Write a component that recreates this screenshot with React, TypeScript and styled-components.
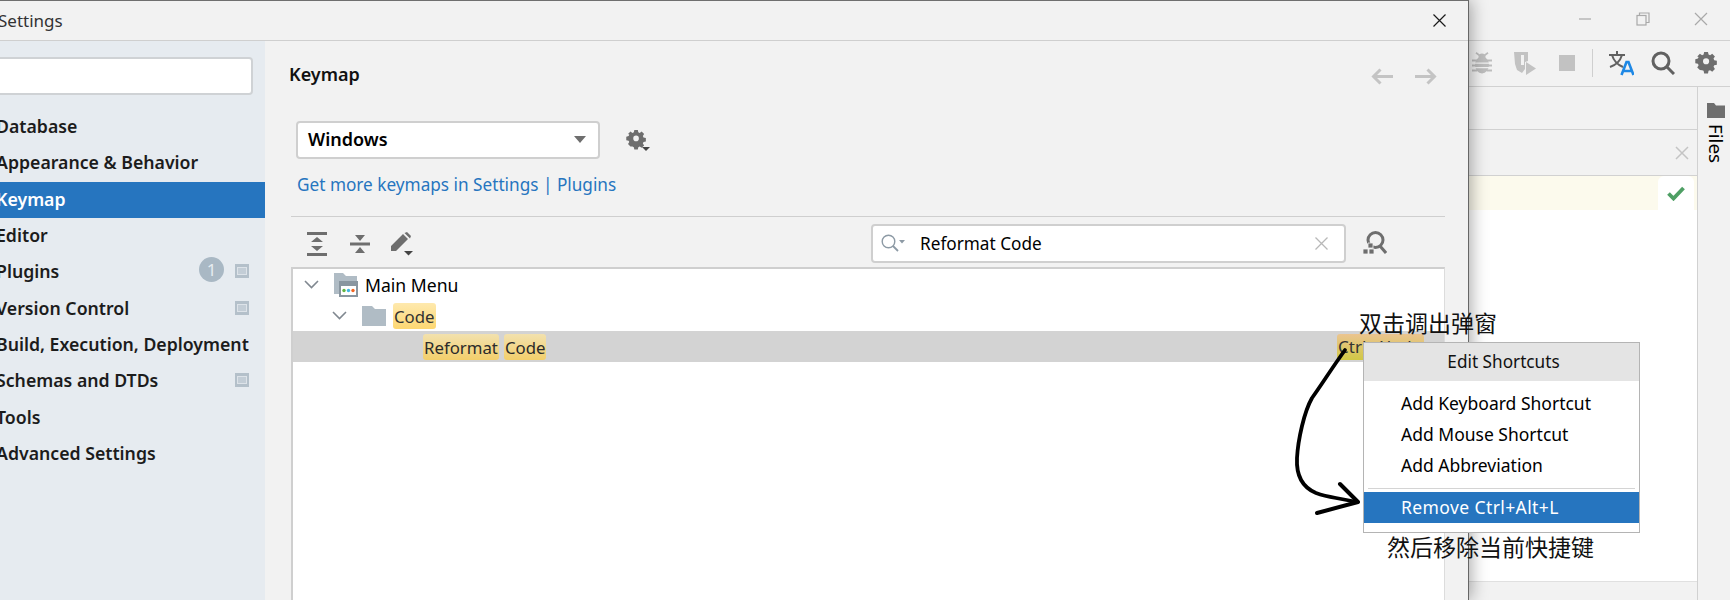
import styled, { createGlobalStyle } from "styled-components";

const UI_FONT = `"Noto Sans", "Open Sans", sans-serif`;
const CJK_FONT = `"Noto Sans CJK SC", "Noto Sans", sans-serif`;

const GlobalStyle = createGlobalStyle`
  html, body {
    margin: 0;
    padding: 0;
    background: #ffffff;
    overflow: hidden;
  }
  * {
    box-sizing: border-box;
  }
`;

const sidebarItems = [
  { label: "Database" },
  { label: "Appearance & Behavior" },
  { label: "Keymap", active: true },
  { label: "Editor" },
  { label: "Plugins", badge: "1", pin: true },
  { label: "Version Control", pin: true },
  { label: "Build, Execution, Deployment" },
  { label: "Schemas and DTDs", pin: true },
  { label: "Tools" },
  { label: "Advanced Settings" },
];

function App() {
  return (
    <Page>
      <GlobalStyle />
      <IdeWindow>
        <IdeTitleBar>
          <WindowButton>
            <svg width="14" height="14" viewBox="0 0 14 14">
              <path d="M1 7h12" stroke="#a9a9a9" strokeWidth="1.2" />
            </svg>
          </WindowButton>
          <WindowButton>
            <svg width="14" height="14" viewBox="0 0 14 14" fill="none" stroke="#a9a9a9" strokeWidth="1.2">
              <rect x="1" y="3.5" width="9" height="9.5" />
              <path d="M3.5 3.5V1H13v9.5h-3" />
            </svg>
          </WindowButton>
          <WindowButton>
            <svg width="14" height="14" viewBox="0 0 14 14">
              <path d="M1 1l12 12M13 1L1 13" stroke="#a9a9a9" strokeWidth="1.2" />
            </svg>
          </WindowButton>
        </IdeTitleBar>
        <IdeToolbar>
          <ToolIcon>
            <svg width="20" height="22" viewBox="0 0 20 22" fill="#bdbdbd">
              <ellipse cx="10" cy="13" rx="7" ry="8.500" />
              <circle cx="10" cy="5" r="3.500" />
              <path d="M4.500 0l4 3-1 1.500-4-3zM15.500 0l-4 3 1 1.500 4-3z" />
              <path d="M0 7.500h5v2H0zM15 7.500h5v2h-5zM0 12.500h5v2H0zM15 12.500h5v2h-5zM0 17.500h5v2H0zM15 17.500h5v2h-5z" />
              <path d="M3 10.500h14v1.300H3zM3 15h14v1.300H3z" fill="#f2f2f2" />
            </svg>
          </ToolIcon>
          <ToolIcon>
            <svg width="24" height="24" viewBox="0 0 24 24">
              <path d="M1 1h14v9l-3 1v7l-3 4-5-3-2-6z" fill="#c2c2c2" />
              <path d="M8 4h3v10H8z" fill="#f2f2f2" />
              <path d="M13 11l10 6.500-10 6.500z" fill="#c2c2c2" />
            </svg>
          </ToolIcon>
          <ToolIcon>
            <StopSquare />
          </ToolIcon>
          <ToolDivider />
          <ToolIcon>
            <svg width="26" height="26" viewBox="0 0 26 26" fill="none">
              <path d="M1 5h16M9 1v4M4 5c1.500 5 6 10 11 12M14 5c-1.500 5-6 10-12 12" stroke="#616161" strokeWidth="2" />
              <path d="M13.500 25l5-13h2l5 13M15.500 21h8" stroke="#1e88e5" strokeWidth="2.600" />
            </svg>
          </ToolIcon>
          <ToolIcon>
            <svg width="24" height="24" viewBox="0 0 24 24" fill="none" stroke="#616161" strokeWidth="3">
              <circle cx="10" cy="10" r="8" />
              <path d="M16 16l7 7" />
            </svg>
          </ToolIcon>
          <ToolIcon>
            <GearIcon size={22} />
          </ToolIcon>
        </IdeToolbar>
        <IdeWorkspace>
          <EditorColumn>
            <TabStrip />
            <EditorHeader>
              <svg width="14" height="14" viewBox="0 0 14 14">
                <path d="M1 1l12 12M13 1L1 13" stroke="#c4c4c4" strokeWidth="1.500" />
              </svg>
            </EditorHeader>
            <NoticeBanner>
              <CheckBadge>
                <svg width="18" height="15" viewBox="0 0 18 15" fill="none">
                  <path d="M1.500 7.500l5 5L16.500 2" stroke="#4e9f64" strokeWidth="3.800" />
                </svg>
              </CheckBadge>
            </NoticeBanner>
            <CodeArea />
            <StatusStrip />
          </EditorColumn>
          <FilesStrip>
            <svg width="18" height="15" viewBox="0 0 18 15" fill="#6e6e6e">
              <path d="M0 0h7l2 2.500h9V15H0z" />
            </svg>
            <FilesLabel>Files</FilesLabel>
          </FilesStrip>
        </IdeWorkspace>
      </IdeWindow>

      <Dialog>
        <DialogTitleBar>
          <DialogTitle>Settings</DialogTitle>
          <svg width="13" height="13" viewBox="0 0 13 13">
            <path d="M.5.500l12 12M12.500.500l-12 12" stroke="#1a1a1a" strokeWidth="1.200" />
          </svg>
        </DialogTitleBar>
        <DialogBody>
          <Sidebar>
            <SidebarSearch />
            <SidebarList>
              {sidebarItems.map((item) => (
                <SidebarItem key={item.label} $active={item.active}>
                  <span>{item.label}</span>
                  {item.badge && <Badge>{item.badge}</Badge>}
                  {item.pin && <PinIcon />}
                </SidebarItem>
              ))}
            </SidebarList>
          </Sidebar>
          <Panel>
            <PanelHeader>
              <PanelTitle>Keymap</PanelTitle>
              <NavArrows>
                <svg width="22" height="17" viewBox="0 0 22 17" fill="none" stroke="#c4c4c4" strokeWidth="3">
                  <path d="M22 8.500H3M9.500 1.500l-7 7 7 7" />
                </svg>
                <svg width="22" height="17" viewBox="0 0 22 17" fill="none" stroke="#c4c4c4" strokeWidth="3">
                  <path d="M0 8.500h19M12.500 1.500l7 7-7 7" />
                </svg>
              </NavArrows>
            </PanelHeader>
            <ComboRow>
              <Combo>
                <ComboValue>Windows</ComboValue>
                <ComboArrow />
              </Combo>
              <GearButton>
                <GearIcon size={20} />
                <SmallArrow />
              </GearButton>
            </ComboRow>
            <LinkLine>Get more keymaps in Settings | Plugins</LinkLine>
            <Separator />
            <TreeToolbar>
              <TreeTool>
                <svg width="20" height="24" viewBox="0 0 20 24" fill="#6e6e6e">
                  <path d="M0 0h20v3H0zM0 21h20v3H0zM10 5l6 5H4zM10 19l-6-5h12z" />
                </svg>
              </TreeTool>
              <TreeTool>
                <svg width="20" height="20" viewBox="0 0 20 20" fill="#6e6e6e">
                  <path d="M0 8.500h20v3H0zM10 7L5 1h10zM10 13l5 6H5z" />
                </svg>
              </TreeTool>
              <TreeTool>
                <svg width="24" height="24" viewBox="0 0 24 24" fill="#6e6e6e">
                  <path d="M1 14L13 2l5 5L6 19H1zM14.500 1L17 0l4 4-1 2.500z" />
                  <path d="M14 19h9l-4.500 4.500z" fill="#444444" />
                </svg>
              </TreeTool>
              <SearchField>
                <svg width="25" height="18" viewBox="0 0 25 18" fill="none">
                  <circle cx="7.500" cy="7.500" r="6.300" stroke="#8d9aa5" strokeWidth="1.400" />
                  <path d="M12 12l5 5" stroke="#8d9aa5" strokeWidth="1.800" />
                  <path d="M18 6h6l-3 3.500z" fill="#8d9aa5" />
                </svg>
                <SearchText>Reformat Code</SearchText>
                <svg width="13" height="13" viewBox="0 0 13 13">
                  <path d="M.5.500l12 12M12.500.500l-12 12" stroke="#b8b8b8" strokeWidth="1.300" />
                </svg>
              </SearchField>
              <FindShortcut>
                <svg width="24" height="24" viewBox="0 0 24 24">
                  <circle cx="12.500" cy="9" r="7.500" fill="none" stroke="#6e6e6e" strokeWidth="3" />
                  <path d="M17 15l6 7" stroke="#6e6e6e" strokeWidth="3" />
                  <path d="M5 12h5v5H5zM0 18h5v5H0zM6 18h5v5H6z" fill="#6e6e6e" stroke="#f2f2f2" strokeWidth=".8" />
                </svg>
              </FindShortcut>
            </TreeToolbar>
            <Tree>
              <TreeRow $indent={11}>
                <Chevron />
                <TreeIconSlot>
                  <svg width="24" height="24" viewBox="0 0 24 24">
                    <path d="M0 0h9l3 3h11v6H7v12H0z" fill="#b0bcc5" />
                    <rect x="5" y="8" width="19" height="16" fill="#8996a0" />
                    <rect x="7" y="13" width="15" height="9" fill="#ffffff" />
                    <circle cx="10" cy="17.500" r="1.700" fill="#62b543" />
                    <circle cx="14.500" cy="17.500" r="1.700" fill="#40b6e0" />
                    <circle cx="19" cy="17.500" r="1.700" fill="#f26522" />
                  </svg>
                </TreeIconSlot>
                <RowText>Main Menu</RowText>
              </TreeRow>
              <TreeRow $indent={39}>
                <Chevron />
                <TreeIconSlot>
                  <svg width="24" height="20" viewBox="0 0 24 20">
                    <path d="M0 0h10l3 3h11v17H0z" fill="#b0bcc5" />
                  </svg>
                </TreeIconSlot>
                <Mark>Code</Mark>
              </TreeRow>
              <TreeRow $indent={130} $selected>
                <Mark $dim>Reformat</Mark>
                <Mark $dim>Code</Mark>
                <ShortcutMark>Ctrl+Alt+L</ShortcutMark>
              </TreeRow>
            </Tree>
          </Panel>
        </DialogBody>
      </Dialog>

      <Note $left={1359} $top={305}>双击调出弹窗</Note>

      <ShortcutMenu>
        <MenuHeader>Edit Shortcuts</MenuHeader>
        <MenuList>
          <MenuItem>Add Keyboard Shortcut</MenuItem>
          <MenuItem>Add Mouse Shortcut</MenuItem>
          <MenuItem>Add Abbreviation</MenuItem>
        </MenuList>
        <MenuSeparator />
        <MenuItem $selected>Remove Ctrl+Alt+L</MenuItem>
      </ShortcutMenu>

      <Note $left={1387} $top={529}>然后移除当前快捷键</Note>

      <ArrowInk width="100" height="190" viewBox="1280 340 100 190" fill="none">
        <path
          d="M1345 350 C1332 368 1322 384 1312 398 C1304 412 1298 440 1297 458 C1296 478 1304 488 1316 493 C1324 496 1330 497 1336 498 L1357 502"
          stroke="#000000"
          strokeWidth="3.800"
          strokeLinecap="round"
          strokeLinejoin="round"
        />
        <path
          d="M1340 484 L1358 502 L1317 513"
          stroke="#000000"
          strokeWidth="4"
          strokeLinecap="round"
          strokeLinejoin="round"
        />
      </ArrowInk>
    </Page>
  );
}

export default App;

function GearIcon({ size }: { size: number }) {
  return (
    <svg width={size} height={size} viewBox="0 0 24 24" fill="#6e6e6e">
      <path
        fillRule="evenodd"
        d="M9.500 0h5l.7 3.300 2 .9L20 2.300l3.500 3.500-1.800 2.800.9 2 3.400.9v5l-3.400.7-.9 2 1.800 2.800-3.500 3.500-2.800-1.800-2 .8-.7 3.400h-5l-.7-3.400-2-.8L4 23.500.5 20l1.800-2.800-.9-2L-2 14.500v-5l3.400-.9.9-2L.5 5.800 4 2.300l2.800 1.900 2-.9zM12 8a4 4 0 1 0 0 8 4 4 0 0 0 0-8z"
        transform="translate(2 0) scale(.84)"
      />
    </svg>
  );
}

function PinIcon() {
  return (
    <PinBox>
      <PinInner />
    </PinBox>
  );
}

function Chevron() {
  return (
    <svg width="15" height="9" viewBox="0 0 15 9" fill="none">
      <path d="M1 1l6.500 6.500L14 1" stroke="#808890" strokeWidth="1.600" />
    </svg>
  );
}

const Page = styled.div`
  position: relative;
  width: 1730px;
  height: 600px;
  overflow: hidden;
  font-family: ${UI_FONT};
`;

const IdeWindow = styled.div`
  display: flex;
  flex-direction: column;
  height: 100%;
  background: #f2f2f2;
`;

const IdeTitleBar = styled.div`
  display: flex;
  justify-content: flex-end;
  align-items: center;
  height: 41px;
  padding: 0 0 3px 0;
  border-bottom: 1px solid #d1d1d1;
`;

const WindowButton = styled.div`
  display: flex;
  justify-content: center;
  width: 58px;
`;

const IdeToolbar = styled.div`
  display: flex;
  justify-content: flex-end;
  align-items: center;
  height: 46px;
  padding: 0 3px 2px 0;
  border-bottom: 1px solid #d1d1d1;
`;

const ToolIcon = styled.div`
  display: flex;
  justify-content: center;
  width: 42.500px;
`;

const StopSquare = styled.div`
  width: 16px;
  height: 16px;
  background: #c2c2c2;
`;

const ToolDivider = styled.div`
  width: 1px;
  height: 28px;
  margin: 0 7px 0 3px;
  background: #cfcfcf;
`;

const IdeWorkspace = styled.div`
  display: flex;
  flex: 1;
  min-height: 0;
`;

const EditorColumn = styled.div`
  display: flex;
  flex: 1;
  flex-direction: column;
`;

const TabStrip = styled.div`
  height: 43px;
  border-bottom: 1px solid #d1d1d1;
`;

const EditorHeader = styled.div`
  display: flex;
  justify-content: flex-end;
  align-items: center;
  height: 46px;
  padding-right: 8px;
  border-bottom: 1px solid #d1d1d1;
`;

const NoticeBanner = styled.div`
  display: flex;
  justify-content: flex-end;
  height: 34px;
  padding-right: 3px;
  background: #fcfaed;
`;

const CheckBadge = styled.div`
  display: flex;
  justify-content: center;
  align-items: center;
  width: 36px;
  height: 34px;
  border-radius: 6px 6px 0 0;
  background: #ffffff;
`;

const CodeArea = styled.div`
  flex: 1;
  background: #ffffff;
`;

const StatusStrip = styled.div`
  height: 19px;
  border-top: 1px solid #e0e0e0;
`;

const FilesStrip = styled.div`
  display: flex;
  flex-direction: column;
  align-items: center;
  gap: 6px;
  width: 33px;
  padding: 16px 0 0 3px;
  border-left: 1px solid #d1d1d1;
`;

const FilesLabel = styled.div`
  writing-mode: vertical-rl;
  font-size: 18.800px;
  line-height: 18px;
  color: #000000;
`;

const Dialog = styled.div`
  position: absolute;
  top: 0;
  left: -20px;
  display: flex;
  flex-direction: column;
  width: 1489px;
  height: 600px;
  background: #f2f2f2;
  border-top: 1px solid #6f6f6f;
  border-right: 1px solid #666666;
  box-shadow: 2px 0 16px rgba(0, 0, 0, 0.35);
`;

const DialogTitleBar = styled.div`
  display: flex;
  justify-content: space-between;
  align-items: center;
  height: 40px;
  padding: 0 22px 0 18px;
  border-bottom: 1px solid #cfcfcf;
`;

const DialogTitle = styled.div`
  font-size: 17px;
  color: #333333;
`;

const DialogBody = styled.div`
  display: flex;
  flex: 1;
  min-height: 0;
`;

const Sidebar = styled.div`
  width: 285px;
  padding-top: 16px;
  background: #e6ebf0;
`;

const SidebarSearch = styled.div`
  width: 273px;
  height: 38px;
  border: 2px solid #cfd2d5;
  border-radius: 4px;
  background: #ffffff;
`;

const SidebarList = styled.div`
  margin-top: 14px;
`;

const SidebarItem = styled.div<{ $active?: boolean }>`
  display: flex;
  align-items: center;
  height: 36.300px;
  padding: 0 0 2px 16px;
  font-size: 17.700px;
  font-weight: 600;
  color: ${(p) => (p.$active ? "#ffffff" : "#1c1c1c")};
  background: ${(p) => (p.$active ? "#2675bf" : "transparent")};
  white-space: nowrap;
`;

const Badge = styled.div`
  display: flex;
  justify-content: center;
  align-items: center;
  width: 25px;
  height: 25px;
  margin: -4px 0 0 auto;
  border-radius: 50%;
  background: #a9b8c4;
  color: #e6ebf0;
  font-size: 17px;
  font-weight: 400;
`;

const PinBox = styled.div`
  display: flex;
  justify-content: center;
  align-items: center;
  width: 14px;
  height: 14px;
  margin-right: 16px;
  margin-left: auto;
  background: #b4c0ca;

  ${Badge} + & {
    margin-left: 11px;
  }
`;

const PinInner = styled.div`
  width: 10px;
  height: 8px;
  background: #c3cdd6;
  border: 1px solid #dde3e9;
`;

const Panel = styled.div`
  display: flex;
  flex: 1;
  flex-direction: column;
  min-width: 0;
  padding: 0 23px 0 26px;
`;

const PanelHeader = styled.div`
  display: flex;
  justify-content: space-between;
  align-items: center;
  height: 68px;
  padding: 0 8px 2px 0;
  margin-left: -2px;
`;

const PanelTitle = styled.div`
  font-size: 18px;
  font-weight: 600;
  color: #111111;
`;

const NavArrows = styled.div`
  display: flex;
  gap: 22px;
  margin-top: 4px;
`;

const ComboRow = styled.div`
  display: flex;
  align-items: center;
  margin: 12px 0 0 5px;
`;

const Combo = styled.div`
  display: flex;
  justify-content: space-between;
  align-items: center;
  width: 304px;
  height: 38px;
  padding: 0 12px 2px 10px;
  border: 2px solid #cfcfcf;
  border-radius: 4px;
  background: #ffffff;
`;

const ComboValue = styled.span`
  font-size: 18px;
  font-weight: 600;
  color: #000000;
`;

const ComboArrow = styled.span`
  width: 0;
  height: 0;
  border-left: 6.500px solid transparent;
  border-right: 6.500px solid transparent;
  border-top: 7px solid #6e6e6e;
`;

const GearButton = styled.div`
  position: relative;
  display: flex;
  margin-left: 26px;
`;

const SmallArrow = styled.span`
  position: absolute;
  right: -4px;
  bottom: -1px;
  width: 0;
  height: 0;
  border-left: 4px solid transparent;
  border-right: 4px solid transparent;
  border-top: 4px solid #444444;
`;

const LinkLine = styled.div`
  margin: 13px 0 0 6px;
  font-size: 17.200px;
  line-height: 26px;
  color: #2675bf;
`;

const Separator = styled.div`
  height: 1px;
  margin-top: 18px;
  background: #cfcfcf;
`;

const TreeToolbar = styled.div`
  display: flex;
  align-items: center;
  height: 50px;
  padding: 2px 58px 0 0;
`;

const TreeTool = styled.div`
  display: flex;
  justify-content: center;
  width: 42.500px;
  margin-top: 1px;
  &:first-child {
    margin-left: 5px;
  }
`;

const SearchField = styled.div`
  display: flex;
  align-items: center;
  width: 475px;
  height: 39px;
  margin-left: auto;
  padding: 0 16px 0 8px;
  border: 2px solid #cfcfcf;
  border-radius: 4px;
  background: #ffffff;
`;

const SearchText = styled.span`
  flex: 1;
  margin: 1px 0 0 14px;
  font-size: 17.200px;
  color: #000000;
`;

const FindShortcut = styled.div`
  display: flex;
  margin: 0 0 0 17px;
`;

const Tree = styled.div`
  flex: 1;
  background: #ffffff;
  border-top: 2px solid #cfcfcf;
  border-left: 2px solid #cfcfcf;
  border-right: 1px solid #dcdcdc;
`;

const TreeRow = styled.div<{ $indent: number; $selected?: boolean }>`
  display: flex;
  align-items: center;
  gap: ${(p) => (p.$selected ? "5px" : "0")};
  height: 31px;
  padding-left: ${(p) => p.$indent}px;
  background: ${(p) => (p.$selected ? "#d3d3d3" : "transparent")};
`;

const TreeIconSlot = styled.div`
  display: flex;
  margin: 0 7px 0 15px;
`;

const RowText = styled.span`
  font-size: 17.600px;
  color: #000000;
`;

const Mark = styled.span<{ $dim?: boolean }>`
  height: 26px;
  padding: 0 1px;
  border-radius: 3px;
  font-size: 16.800px;
  line-height: 27px;
  color: ${(p) => (p.$dim ? "#2b2b2b" : "#333333")};
  background: ${(p) =>
    p.$dim
      ? "linear-gradient(#f2e1ae, #f3cf6b)"
      : "linear-gradient(#fee9ae, #fdd772)"};
`;

const ShortcutMark = styled.span`
  width: 87px;
  height: 26px;
  margin-left: auto;
  margin-right: 20px;
  padding-left: 1px;
  border-radius: 3px;
  font-size: 17px;
  line-height: 26px;
  color: #333333;
  background: linear-gradient(#ebc490, #d0c845);
  white-space: nowrap;
`;

const Note = styled.div<{ $left: number; $top: number }>`
  position: absolute;
  left: ${(p) => p.$left}px;
  top: ${(p) => p.$top}px;
  font-family: ${CJK_FONT};
  font-size: 23px;
  line-height: 34px;
  color: #111111;
  white-space: nowrap;
`;

const ShortcutMenu = styled.div`
  position: absolute;
  left: 1363px;
  top: 342px;
  width: 277px;
  height: 191px;
  border: 1px solid #b4b4b4;
  background: #ffffff;
`;

const MenuHeader = styled.div`
  height: 38px;
  padding-left: 4px;
  font-size: 17.200px;
  line-height: 37px;
  text-align: center;
  color: #111111;
  background: #e4e4e4;
`;

const MenuList = styled.div`
  padding-top: 7px;
`;

const MenuItem = styled.div<{ $selected?: boolean }>`
  height: 31px;
  padding-left: 37px;
  font-size: 17.500px;
  line-height: 31px;
  letter-spacing: ${(p) => (p.$selected ? "0.4px" : "0")};
  color: ${(p) => (p.$selected ? "#ffffff" : "#000000")};
  background: ${(p) => (p.$selected ? "#2675bf" : "transparent")};
`;

const MenuSeparator = styled.div`
  height: 1px;
  margin: 7px 4px 3px;
  background: #d4d4d4;
`;

const ArrowInk = styled.svg`
  position: absolute;
  left: 1280px;
  top: 340px;
  overflow: visible;
`;
